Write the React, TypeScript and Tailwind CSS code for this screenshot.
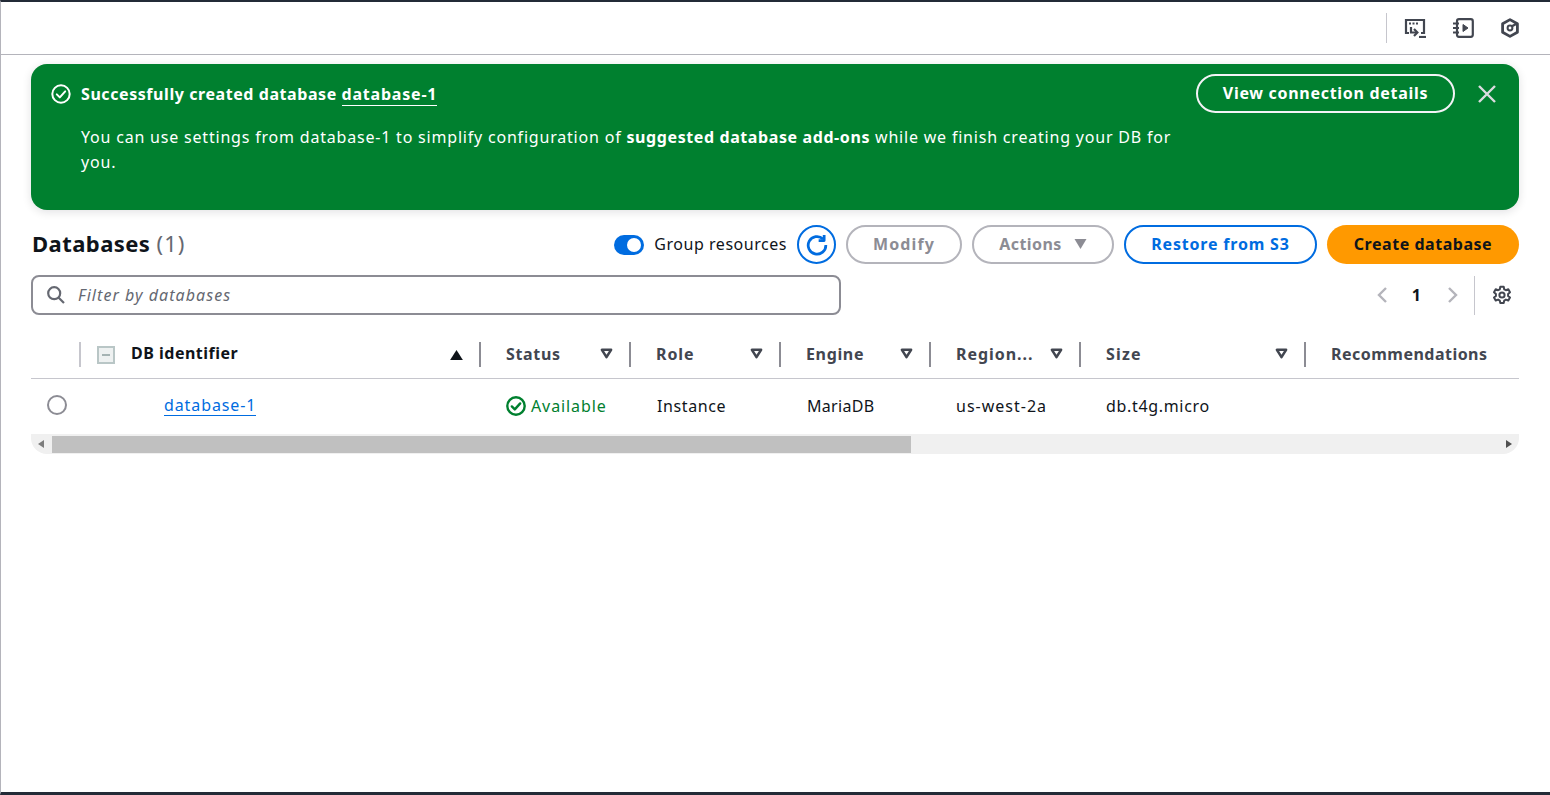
import React from "react";

const font = "font-['Noto_Sans',sans-serif]";

function CheckCircle({ className, weight = 2 }: { className: string; weight?: number }) {
  return (
    <svg viewBox="0 0 20 20" fill="none" stroke="currentColor" strokeWidth={weight} className={className}>
      <circle cx="10" cy="10" r="8.7" />
      <path d="M5.8 10.4l3 3 5.4-6" strokeLinecap="round" strokeLinejoin="round" />
    </svg>
  );
}

function TopIcons() {
  return (
    <div className="flex items-center text-[#424650]">
      <svg viewBox="0 0 22 20" width="22" height="20" fill="none" stroke="currentColor" strokeWidth="2.2" className="mr-[26px]">
        <path d="M5 15H2V2h18v13h-3" />
        <path d="M5 5.5h2M8.5 5.5h2M12 5.5h2" strokeWidth="1.8" />
        <path d="M7 9v5.5h6" />
        <path d="M10 11l3.4 3.5L10 18" />
        <path d="M15 19h7" />
      </svg>
      <svg viewBox="0 0 22 20" width="22" height="20" fill="none" stroke="currentColor" strokeWidth="2.2" className="mr-[27px]">
        <rect x="5" y="1.2" width="15.8" height="17.6" rx="2" />
        <path d="M1 5.5h6M1 10h6M1 14.5h6" />
        <path d="M11 6.5l5 3.5-5 3.5z" fill="currentColor" strokeWidth="1" />
      </svg>
      <svg viewBox="0 0 18 20" width="18" height="20" fill="none" stroke="currentColor" strokeWidth="2.8" strokeLinejoin="round" className="mr-[31px]">
        <path d="M9 1.6l7.4 4.2v8.4L9 18.4l-7.4-4.2V5.8z" />
        <circle cx="9" cy="10" r="2.4" strokeWidth="2" />
        <path d="M10.5 8.5l5.5-3" strokeWidth="2.4" />
      </svg>
    </div>
  );
}

function SortDown() {
  return (
    <svg viewBox="0 0 14 12" width="13" height="11" fill="none" stroke="#424650" strokeWidth="2.8" strokeLinejoin="round">
      <path d="M2 2h10l-5 8z" />
    </svg>
  );
}

function Th({ label, width, tracking, sep = true }: { label: string; width: string; tracking: string; sep?: boolean }) {
  return (
    <div className={`${width} relative flex h-full shrink-0 items-center justify-between pb-1 pl-[25px] pr-[18px]`}>
      <span className={`${tracking} text-[16px] font-bold text-[#424650]`}>{label}</span>
      {sep && <SortDown />}
      {sep && <span className="absolute right-0 top-[9px] h-[25px] w-0.5 bg-[#8c8c94]" />}
    </div>
  );
}

export default function App() {
  return (
    <div className={`${font} flex h-[795px] flex-col overflow-hidden border-t-2 border-b-[3px] border-l border-t-[#232b37] border-b-[#232b37] border-l-[#b4b4bb] bg-white text-[16px] text-[#0f141a]`}>
      <header className="flex h-[53px] shrink-0 items-center justify-end border-b border-[#b4b4bb]">
        <div className="mr-[17px] h-[30px] w-px bg-[#c6c6cd]" />
        <TopIcons />
      </header>

      <main className="flex flex-col pl-[30px] pr-[31px] pt-[9px]">
        <section className="flex h-[146px] rounded-2xl bg-[#00802f] pl-5 pr-[22px] pt-[10px] text-white shadow-[0_2px_10px_rgba(0,7,22,0.12)]">
          <div className="flex min-w-0 flex-1 flex-col">
            <div className="flex h-[39px] items-center gap-2.5">
              <CheckCircle className="h-5 w-5 shrink-0" />
              <p className="text-[16px] font-bold tracking-[0.57px]">
                Successfully created database{" "}
                <span className="border-b border-white tracking-[0.8px]">database-1</span>
              </p>
            </div>
            <p className="mt-3 w-[1125px] pl-[30px] text-[16px] leading-[25px] tracking-[0.8px]">
              You can use settings from database-1 to simplify configuration of{" "}
              <b className="tracking-[0.6px]">suggested database add-ons</b> while we finish creating your DB for you.
            </p>
          </div>
          <button className="h-[39px] w-[259px] shrink-0 rounded-full border-2 border-[#f3f3f7] pb-px text-[16px] font-bold tracking-[0.7px]">
            View connection details
          </button>
          <svg viewBox="0 0 20 20" width="20" height="20" fill="none" stroke="#dbdbe0" strokeWidth="2.4" className="ml-[22px] mt-[10px] shrink-0">
            <path d="M2 2l16 16M18 2L2 18" />
          </svg>
        </section>

        <div className="mt-[15px] flex h-[39px] items-center">
          <h1 className="pb-0.5 pl-px text-[22px] font-bold tracking-[0.45px]">
            Databases <span className="font-normal tracking-[1px] text-[#656871]">(1)</span>
          </h1>
          <div className="ml-auto flex items-center">
            <span className="flex h-5 w-[30px] items-center justify-end rounded-full bg-[#006ce0] pr-[3px]">
              <span className="h-3.5 w-3.5 rounded-full bg-white" />
            </span>
            <span className="ml-2.5 pb-px text-[16px] tracking-[0.53px]">Group resources</span>
            <button className="ml-2.5 flex h-[39px] w-[39px] items-center justify-center rounded-full border-2 border-[#006ce0] text-[#006ce0]">
              <svg viewBox="0 0 20 20" width="22" height="22" fill="none" stroke="currentColor" strokeWidth="2.5">
                <path d="M15.5 4.5A8 8 0 1 0 18 10" />
                <path d="M16.5 1v5h-5" strokeLinejoin="round" />
              </svg>
            </button>
            <button className="ml-2.5 h-[39px] w-[116px] rounded-full border-2 border-[#b4b4bb] pb-px font-bold tracking-[1.1px] text-[#8c8c94]">Modify</button>
            <button className="ml-2.5 flex h-[39px] w-[142px] items-center justify-center gap-3 rounded-full border-2 border-[#b4b4bb] pb-px font-bold tracking-[0.45px] text-[#8c8c94]">
              Actions
              <svg viewBox="0 0 12 10" width="13" height="10" fill="#8c8c94"><path d="M0 0h12L6 10z" /></svg>
            </button>
            <button className="ml-2.5 h-[39px] w-[193px] rounded-full border-2 border-[#006ce0] pb-px font-bold tracking-[0.8px] text-[#006ce0]">Restore from S3</button>
            <button className="ml-2.5 h-[39px] w-[192px] rounded-full bg-[#ff9900] pb-px font-bold tracking-[0.53px] text-[#0f141a]">Create database</button>
          </div>
        </div>

        <div className="mt-[11px] flex h-[40px] items-center">
          <div className="flex h-[40px] w-[810px] items-center rounded-lg border-2 border-[#8c8c94] pl-[14px]">
            <svg viewBox="0 0 18 18" width="18" height="18" fill="none" stroke="#656871" strokeWidth="2.2">
              <circle cx="7.2" cy="7.2" r="6" />
              <path d="M11.5 11.5l5.5 5.5" />
            </svg>
            <span className="ml-[13px] text-[16px] italic tracking-[1.05px] text-[#656871]">Filter by databases</span>
          </div>
          <div className="ml-auto flex h-[40px] items-center">
            <svg viewBox="0 0 12 18" width="12" height="18" fill="none" stroke="#b4b4bb" strokeWidth="2.4"><path d="M10 2L3 9l7 7" /></svg>
            <span className="ml-[24px] text-[16px] font-bold">1</span>
            <svg viewBox="0 0 12 18" width="12" height="18" fill="none" stroke="#b4b4bb" strokeWidth="2.4" className="ml-[26px]"><path d="M2 2l7 7-7 7" /></svg>
            <span className="ml-[15px] h-[39px] w-px bg-[#c6c6cd]" />
            <svg viewBox="0 0 20 20" width="20" height="20" fill="none" stroke="#424650" strokeWidth="2" strokeLinejoin="round" className="ml-[17px] mr-[7px]">
              <path d="M8.3 1.8h3.4l.5 2.5 1.7.9 2.4-.9 1.7 3-1.9 1.6v2l1.9 1.6-1.7 3-2.4-.9-1.7 1-.5 2.4H8.3l-.5-2.4-1.7-1-2.4.9-1.7-3L3.9 11V9L2 7.3l1.7-3 2.4.9 1.7-.9z" />
              <circle cx="10" cy="10" r="2.6" />
            </svg>
          </div>
        </div>

        <div className="mt-[18px] overflow-hidden">
          <div className="flex h-[46px] items-center border-b border-[#c6c6cd]">
            <div className="relative h-full w-[50px] shrink-0">
              <span className="absolute right-0 top-[9px] h-[25px] w-0.5 bg-[#c6c6cd]" />
            </div>
            <div className="relative flex h-full w-[400px] shrink-0 items-center justify-between pb-0.5 pl-4 pr-[18px]">
              <span className="flex items-center">
                <span className="flex h-[18px] w-[18px] items-center justify-center border-2 border-[#b9c6c6] bg-[#eef1f1]">
                  <span className="h-0.5 w-2 bg-[#a5b3b3]" />
                </span>
                <span className="ml-4 -mt-[3px] font-bold tracking-[0.5px]">DB identifier</span>
              </span>
              <svg viewBox="0 0 14 11" width="13" height="10" fill="#0f141a"><path d="M7 0l7 11H0z" /></svg>
              <span className="absolute right-0 top-[9px] h-[25px] w-0.5 bg-[#8c8c94]" />
            </div>
            <Th label="Status" width="w-[150px]" tracking="tracking-[0.65px]" />
            <Th label="Role" width="w-[150px]" tracking="tracking-[0.9px]" />
            <Th label="Engine" width="w-[150px]" tracking="tracking-[0.65px]" />
            <Th label="Region..." width="w-[150px]" tracking="tracking-[0.95px]" />
            <Th label="Size" width="w-[225px]" tracking="tracking-[1.15px]" />
            <Th label="Recommendations" width="w-[213px]" tracking="tracking-[0.48px]" sep={false} />
          </div>

          <div className="flex h-[55px] items-center pb-0.5">
            <div className="mb-0.5 flex w-[50px] shrink-0 items-center pl-4">
              <span className="h-5 w-5 rounded-full border-2 border-[#8c8c94]" />
            </div>
            <div className="mb-0.5 w-[400px] shrink-0 pl-[83px]">
              <span className="inline-block border-b border-[#006ce0] leading-[20px] tracking-[0.9px] text-[#006ce0]">database-1</span>
            </div>
            <div className="flex w-[150px] shrink-0 items-center gap-[5px] pl-[25px] tracking-[0.9px] text-[#00802f]">
              <CheckCircle className="h-5 w-5" weight={2.4} />
              Available
            </div>
            <div className="w-[150px] shrink-0 pl-[26px] tracking-[0.6px]">Instance</div>
            <div className="w-[150px] shrink-0 pl-[26px] tracking-[0.3px]">MariaDB</div>
            <div className="w-[150px] shrink-0 pl-[25px] tracking-[1px]">us-west-2a</div>
            <div className="w-[225px] shrink-0 pl-[25px] tracking-[0.67px]">db.t4g.micro</div>
          </div>

          <div className="flex h-[20px] items-start rounded-b-2xl bg-[#f0f0f0] pt-0.5">
            <svg viewBox="0 0 6 8" width="6" height="8" fill="#7d7d7d" className="ml-[7px] mt-1"><path d="M6 0v8L0 4z" /></svg>
            <div className="ml-2 h-[17px] w-[859px] bg-[#c0c0c0]" />
            <svg viewBox="0 0 6 8" width="6" height="8" fill="#505050" className="ml-auto mr-[7px] mt-1"><path d="M0 0v8l6-4z" /></svg>
          </div>
        </div>
      </main>
    </div>
  );
}
